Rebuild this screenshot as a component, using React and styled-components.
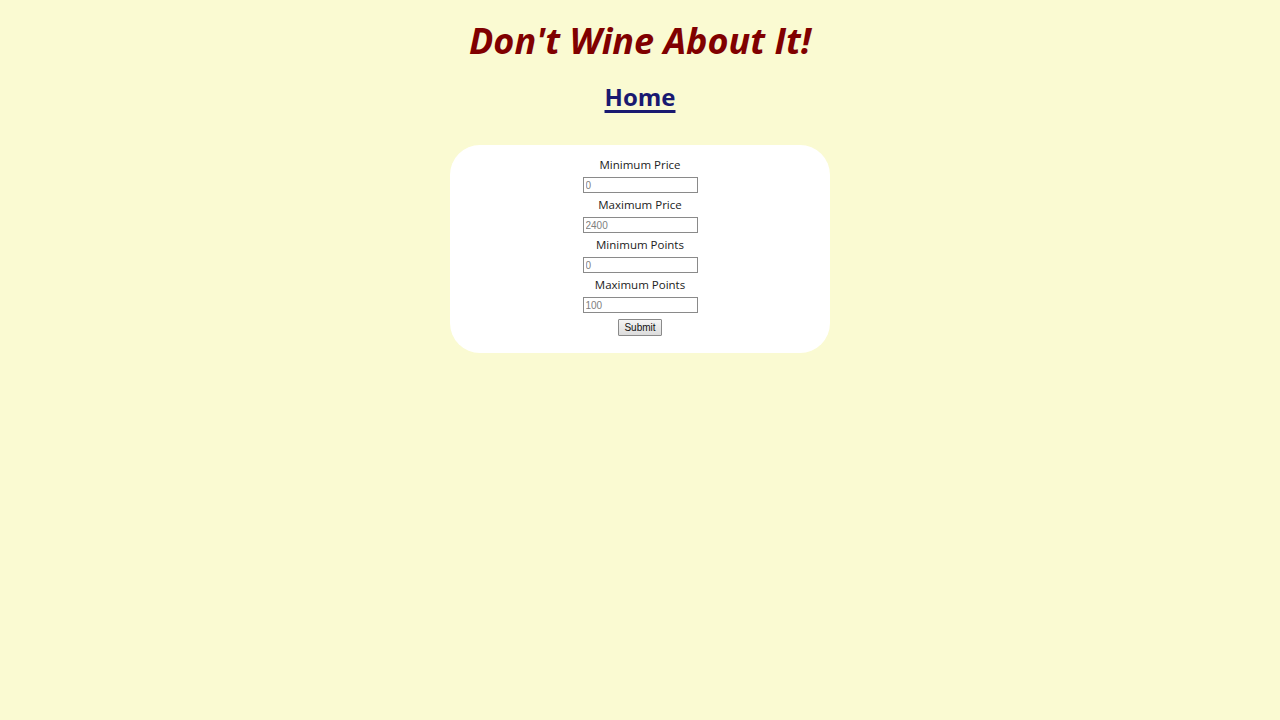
import React from "react";
import styled, { createGlobalStyle } from "styled-components";

const Global = createGlobalStyle`
    body {
        margin: 0;
        background: #fafad2;
        font-family: "Open Sans", "DejaVu Sans", sans-serif;
    }
`;

const Page = styled.div`
    display: flex;
    flex-direction: column;
    align-items: center;
    padding-top: 20px;
`;

const Title = styled.h1`
    margin: 0;
    font-size: 36px;
    line-height: 42px;
    font-style: italic;
    font-weight: bold;
    color: #800000;
`;

const HomeLink = styled.a`
    margin-top: 20px;
    font-size: 24px;
    line-height: 30px;
    font-weight: bold;
    color: #191970;
    text-decoration: underline;
    text-decoration-thickness: 3px;
    text-underline-offset: 4px;
`;

const Card = styled.form`
    margin-top: 33px;
    width: 380px;
    box-sizing: border-box;
    background: white;
    border-radius: 30px;
    padding: 12px 0 17px;
    display: flex;
    flex-direction: column;
    align-items: center;
    gap: 4px;
`;

const Label = styled.label`
    font-size: 11.5px;
    line-height: 16px;
    color: #222;
`;

const Input = styled.input`
    width: 115px;
    height: 16px;
    box-sizing: border-box;
    border: 1px solid #8a8a8a;
    padding: 0 2px;
    font-family: "Liberation Sans", Arial, sans-serif;
    font-size: 10px;
    &::placeholder {
        color: #808080;
    }
`;

const Submit = styled.button`
    margin-top: 2px;
    height: 17px;
    padding: 0 5px;
    font-family: "Liberation Sans", Arial, sans-serif;
    font-size: 10px;
    color: #111;
    background: linear-gradient(#f4f4f4, #dcdcdc);
    border: 1px solid #8a8a8a;
    border-radius: 1px;
`;

const fields = [
    { label: "Minimum Price", placeholder: "0" },
    { label: "Maximum Price", placeholder: "2400" },
    { label: "Minimum Points", placeholder: "0" },
    { label: "Maximum Points", placeholder: "100" },
];

export default function App() {
    return (
        <Page>
            <Global />
            <Title>Don't Wine About It!</Title>
            <HomeLink href="#">Home</HomeLink>
            <Card onSubmit={e => e.preventDefault()}>
                {fields.map(f => (
                    <React.Fragment key={f.label}>
                        <Label>{f.label}</Label>
                        <Input placeholder={f.placeholder} />
                    </React.Fragment>
                ))}
                <Submit type="submit">Submit</Submit>
            </Card>
        </Page>
    );
}
